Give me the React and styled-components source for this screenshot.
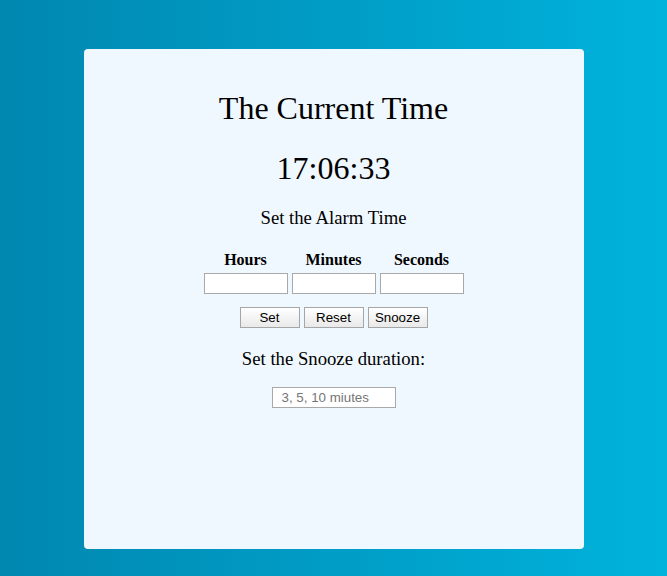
import React from "react";
import styled, { createGlobalStyle } from "styled-components";

const Global = createGlobalStyle`
  html, body { margin: 0; padding: 0; }
  body {
    min-height: 576px;
    background: linear-gradient(to right, #0087b0, #00b3dc);
    font-family: "Liberation Serif", "Times New Roman", serif;
  }
`;

const Page = styled.div`
  padding-top: 49px;
  display: flex;
  justify-content: center;
`;

const Card = styled.main`
  width: 500px;
  height: 500px;
  box-sizing: border-box;
  background: #f0f8ff;
  border-radius: 4px;
  padding-top: 41px;
  display: flex;
  flex-direction: column;
  align-items: center;
  color: #000;
`;

const Big = styled.h1`
  margin: ${(p) => p.$top || 0}px 0 0;
  font-size: 32px;
  line-height: 37px;
  font-weight: normal;
`;

const Sub = styled.h3`
  margin: ${(p) => p.$top}px 0 0;
  font-size: 18.72px;
  line-height: 22px;
  font-weight: normal;
`;

const Grid = styled.div`
  margin-top: 22px;
  display: grid;
  grid-template-columns: repeat(3, 84px);
  column-gap: 4px;
  row-gap: 4px;
`;

const Label = styled.label`
  text-align: center;
  font-weight: bold;
  font-size: 16px;
  line-height: 18px;
`;

const Field = styled.input`
  box-sizing: border-box;
  width: ${(p) => p.$w}px;
  height: 21px;
  margin: ${(p) => p.$top || 0}px 0 0;
  border: 1px solid #a9a9a9;
  background: #fff;
  padding: 0 0 0 ${(p) => p.$pad || 2}px;
  font-family: "Liberation Sans", Arial, sans-serif;
  font-size: 13.33px;
  outline: none;
  &::placeholder { color: #757575; }
`;

const Buttons = styled.div`
  margin-top: 13px;
  display: flex;
  gap: 4px;
`;

const Button = styled.button`
  box-sizing: border-box;
  width: 60px;
  height: 21px;
  padding: 0;
  border: 1px solid #a6a6a6;
  border-radius: 0;
  background: linear-gradient(#ffffff, #e9e9e9);
  font-family: "Liberation Sans", Arial, sans-serif;
  font-size: 13.33px;
  color: #000;
`;

export default function App() {
  return (
    <>
      <Global />
      <Page>
        <Card>
          <Big>The Current Time</Big>
          <Big $top={23}>17:06:33</Big>
          <Sub $top={20}>Set the Alarm Time</Sub>
          <Grid>
            <Label>Hours</Label>
            <Label>Minutes</Label>
            <Label>Seconds</Label>
            <Field $w={84} />
            <Field $w={84} />
            <Field $w={84} />
          </Grid>
          <Buttons>
            <Button>Set</Button>
            <Button>Reset</Button>
            <Button>Snooze</Button>
          </Buttons>
          <Sub $top={20}>Set the Snooze duration:</Sub>
          <Field $w={124} $top={17} $pad={9} placeholder="3, 5, 10 miutes" />
        </Card>
      </Page>
    </>
  );
}
